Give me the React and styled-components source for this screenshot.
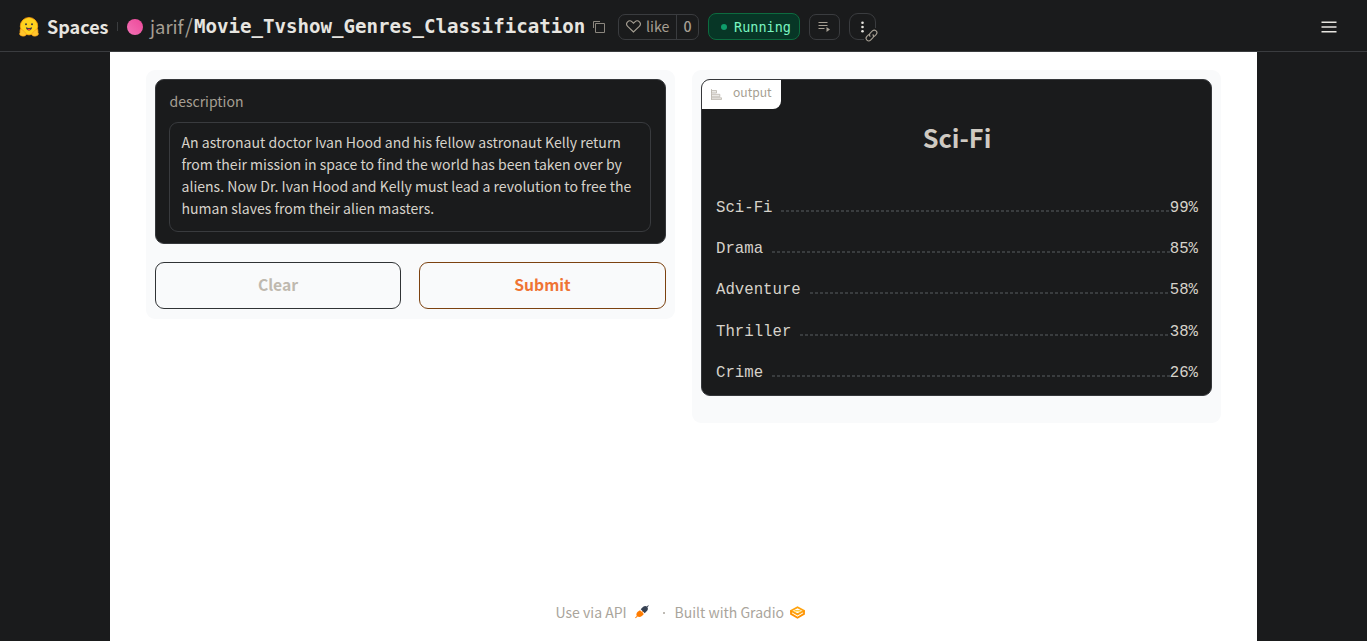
import React from "react";
import styled, { createGlobalStyle } from "styled-components";

const sans = `"Noto Sans CJK SC", "Open Sans", sans-serif`;
const mono = `"Liberation Mono", "DejaVu Sans Mono", monospace`;
const monoStrong = `"DejaVu Sans Mono", "Liberation Mono", monospace`;

const GlobalStyle = createGlobalStyle`
  *, *::before, *::after { box-sizing: border-box; }
  body { margin: 0; background: #1a1b1c; font-family: ${sans}; overflow: hidden; }
  button, textarea { font: inherit; margin: 0; }
`;

const Page = styled.div`
  height: 641px;
  display: flex;
  flex-direction: column;
  background: #1a1b1c;
`;

const Header = styled.header`
  height: 52px;
  flex: none;
  display: flex;
  align-items: center;
  padding: 2px 30px 0 19px;
  border-bottom: 1px solid #3a3c3f;
  color: #e7e5e0;
  white-space: nowrap;
`;

const Brand = styled.span`
  width: 62px;
  margin-left: 8px;
  padding-bottom: 2px;
  font-size: 18px;
  font-weight: 700;
  line-height: 24px;
`;

const Separator = styled.span`
  width: 1px;
  height: 9px;
  margin-left: 8px;
  background: #3b3d3f;
`;

const Avatar = styled.span`
  width: 16px;
  height: 16px;
  margin-left: 9px;
  border-radius: 50%;
  background: linear-gradient(45deg, #f472b6, #ec4899);
`;

const Owner = styled.span`
  width: 35px;
  margin-left: 7px;
  padding-bottom: 2px;
  font-size: 18.4px;
  line-height: 24px;
  color: #a69f93;
`;

const Slash = styled.span`
  width: 9px;
  padding-bottom: 2px;
  font-size: 20px;
  line-height: 24px;
  color: #a69f93;
`;

const SpaceName = styled.span`
  width: 391px;
  font: 700 19.12px/24px ${monoStrong};
`;

const CopyIcon = styled.svg`
  margin-left: 8px;
`;

const LikeGroup = styled.div`
  display: flex;
  width: 81px;
  height: 26px;
  margin-left: 13px;
  border: 1px solid #3a3c3f;
  border-radius: 7px;
  color: #a69f93;
  font-size: 14.2px;
  line-height: 22px;
`;

const LikeAction = styled.div`
  display: flex;
  align-items: center;
  width: 58px;
  gap: 5px;
  padding: 0 0 1px 7px;
  border-right: 1px solid #3a3c3f;
`;

const LikeCount = styled.div`
  flex: 1;
  font-weight: 500;
  text-align: center;
`;

const Status = styled.div`
  display: flex;
  align-items: center;
  width: 92px;
  height: 27px;
  margin-left: 9px;
  padding-left: 12px;
  border: 1px solid #0d6b3f;
  border-radius: 8px;
  background: #073626;
  color: #79f5c0;
  font: 13.5px/24px ${monoStrong};
`;

const StatusDot = styled.span`
  width: 6px;
  height: 6px;
  margin-right: 7px;
  border-radius: 50%;
  background: #0f9d6b;
`;

const IconButton = styled.button`
  position: relative;
  display: flex;
  align-items: center;
  justify-content: center;
  width: ${(p) => p.$width}px;
  height: ${(p) => p.$height}px;
  margin-left: 9px;
  padding: 0;
  border: 1px solid #3a3c3f;
  border-radius: ${(p) => p.$radius}px;
  background: transparent;
  color: #a69f93;
`;

const LinkBadge = styled.span`
  position: absolute;
  left: 14px;
  top: 14px;
  display: flex;
  width: 15px;
  height: 15px;
  background: #1a1b1c;
`;

const MenuIcon = styled.svg`
  margin-left: auto;
`;

const Main = styled.main`
  flex: 1;
  width: 1147px;
  margin-left: 110px;
  padding: 18px 36px 0;
  display: flex;
  flex-direction: column;
  justify-content: space-between;
  background: #fff;
`;

const Columns = styled.div`
  display: flex;
  align-items: flex-start;
  gap: 17px;
`;

const Column = styled.section`
  width: 529px;
  height: ${(p) => p.$height}px;
  padding: 9px;
  border-radius: 9px;
  background: #f9fafb;
`;

const Panel = styled.div`
  position: relative;
  height: ${(p) => p.$height}px;
  overflow: hidden;
  padding: 0 13px 0 14px;
  border: 1px solid #35373a;
  border-radius: 9px;
  background: #1a1b1c;
`;

const FieldLabel = styled.label`
  display: block;
  margin: 10px 0 0 -0.5px;
  font-size: 14px;
  line-height: 22px;
  color: #a69f93;
`;

const TextBox = styled.div`
  height: 110px;
  margin: 10px 1px 0 -1px;
  padding: 8px 11.5px;
  border: 1px solid #393b3e;
  border-radius: 9px;
  color: #d6d2ca;
  font-size: 14.05px;
  line-height: 22px;
  white-space: nowrap;
`;

const Actions = styled.div`
  display: grid;
  grid-template-columns: 246px 247px;
  gap: 18px;
  margin-top: 18px;
`;

const ActionButton = styled.button`
  height: 47px;
  padding: 0 0 2px;
  border: 1px solid ${(p) => (p.$primary ? "#7c4210" : "#303335")};
  border-radius: 9px;
  background: #f9fafb;
  color: ${(p) => (p.$primary ? "#ef7434" : "#bfb9af")};
  font-size: 15.7px;
  font-weight: 700;
  line-height: 24px;
`;

const OutputTab = styled.div`
  position: absolute;
  left: 0;
  top: 0;
  display: flex;
  align-items: center;
  gap: 11px;
  width: 79px;
  height: 29px;
  padding: 0 0 5px 9px;
  border-bottom-right-radius: 8px;
  background: #fff;
  color: #a69f93;
  font-size: 12.1px;
  line-height: 20px;

  svg { margin-top: 4px; }
`;

const TopLabel = styled.h2`
  margin: 37px 0 0;
  color: #cfcac2;
  font-size: 25.3px;
  font-weight: 700;
  line-height: 40px;
  text-align: center;
`;

const Scores = styled.div`
  margin-top: 39px;
`;

const ScoreRow = styled.div`
  display: flex;
  height: 41.2px;
  color: #d6d2ca;
  font: 15.7px/24px ${mono};
`;

const Leader = styled.span`
  flex: 1;
  height: 2px;
  margin: 14px 0 0 9px;
  background: repeating-linear-gradient(90deg, #393c3e 0 3px, transparent 3px 5px);
`;

const Footer = styled.footer`
  display: flex;
  align-items: center;
  justify-content: flex-start;
  height: 24px;
  margin: 0 0 17px 409.5px;
  color: #aaa59c;
  font-size: 14px;
  line-height: 24px;
  white-space: nowrap;
`;

const ApiText = styled.span`
  width: 71px;
`;

const Dot = styled.span`
  width: 2px;
  height: 2px;
  margin: 1px 10px 0 14px;
  border-radius: 1px;
  background: #aaa59c;
`;

const BuiltText = styled.span`
  width: 110px;
`;

const FooterIcon = styled.svg`
  margin-left: ${(p) => p.$gap}px;
`;

const scores = [
  ["Sci-Fi", 99],
  ["Drama", 85],
  ["Adventure", 58],
  ["Thriller", 38],
  ["Crime", 26],
];

const HuggingFace = () => (
  <svg width="20" height="20" viewBox="0 0 20 20">
    <circle cx="10" cy="9.2" r="8.7" fill="#ffd21e" stroke="#ff9d0b" strokeWidth=".8" />
    <path d="M1.3 12.4c1.5-.7 3.8 1.7 5.5 3.8.9 1.2.1 2.8-1.4 2.9-2.7.4-5-.9-4.9-2.4.1-.5.5-.7.7-.9-.7-.8-.5-1.5.3-1.8-.7-.5-.7-1.3-.2-1.6Z" fill="#ffc52c" stroke="#f79b16" strokeWidth=".6" />
    <path d="M18.7 12.4c-1.5-.7-3.8 1.7-5.5 3.8-.9 1.2-.1 2.8 1.4 2.9 2.7.4 5-.9 4.9-2.4-.1-.5-.5-.7-.7-.9.7-.8.5-1.5-.3-1.8.7-.5.7-1.3.2-1.6Z" fill="#ffc52c" stroke="#f79b16" strokeWidth=".6" />
    <circle cx="7" cy="7.3" r="1" fill="#3a3b45" />
    <circle cx="13" cy="7.3" r="1" fill="#3a3b45" />
    <path d="M6.9 10.2c2 .9 4.2.9 6.2 0-.1 2-1.4 3.2-3.1 3.2s-3-1.2-3.1-3.2Z" fill="#3a3b45" />
    <path d="M8.2 12.6c.7-1.2 2.9-1.2 3.6 0-.9 1-2.7 1-3.6 0Z" fill="#f94040" />
  </svg>
);

const LinkGlyph = () => (
  <svg width="15" height="15" viewBox="0 0 15 15" fill="none" stroke="#a69f93" strokeWidth="1.1">
    <g transform="rotate(-45 7.5 7.5)">
      <path d="M6.5 4.9H3.6a2.6 2.6 0 0 0 0 5.2h3.1a2.6 2.6 0 0 0 2.5-2.6" />
      <path d="M8.5 10.1h2.9a2.6 2.6 0 0 0 0-5.2H8.3a2.6 2.6 0 0 0-2.5 2.6" />
    </g>
  </svg>
);

export default function App() {
  return (
    <Page>
      <GlobalStyle />
      <Header>
        <HuggingFace />
        <Brand>Spaces</Brand>
        <Separator />
        <Avatar />
        <Owner>jarif</Owner>
        <Slash>/</Slash>
        <SpaceName>Movie_Tvshow_Genres_Classification</SpaceName>
        <CopyIcon width="12" height="12" viewBox="0 0 12 12" fill="none" stroke="#8b867e">
          <path d="M2.5 2.5h9v9h-9zM.5 7V.5H7" />
        </CopyIcon>
        <LikeGroup>
          <LikeAction>
            <svg width="15" height="13" viewBox="0 0 15 13" fill="none" stroke="currentColor" strokeWidth="1.1">
              <path d="M7.5 12 1.7 6.4C.4 5 .4 3 1.6 1.8s3.2-1.2 4.5 0l1.4 1.4 1.4-1.4c1.3-1.2 3.3-1.2 4.5 0s1.2 3.2-.1 4.6Z" />
            </svg>
            like
          </LikeAction>
          <LikeCount>0</LikeCount>
        </LikeGroup>
        <Status>
          <StatusDot />
          Running
        </Status>
        <IconButton $width={31} $height={26} $radius={7}>
          <svg width="13" height="12" viewBox="0 0 13 12" fill="none" stroke="currentColor">
            <path d="M.5 1.5h9M.5 4.5h9M.5 7.5h6" />
            <path d="M8.5 6v5l3.5-2.5Z" fill="currentColor" stroke="none" />
          </svg>
        </IconButton>
        <IconButton $width={27} $height={27} $radius={9}>
          <svg width="3" height="12" viewBox="0 0 3 12" fill="#e7e5e0">
            <circle cx="1.5" cy="1.7" r="1.3" />
            <circle cx="1.5" cy="6" r="1.3" />
            <circle cx="1.5" cy="10.3" r="1.3" />
          </svg>
          <LinkBadge>
            <LinkGlyph />
          </LinkBadge>
        </IconButton>
        <MenuIcon width="16" height="12" viewBox="0 0 16 12" stroke="#e7e5e0" strokeWidth="1.5">
          <path d="M.5 1.2h15M.5 6h15M.5 10.8h15" />
        </MenuIcon>
      </Header>
      <Main>
        <Columns>
          <Column $height={249}>
            <Panel $height={165}>
              <FieldLabel>description</FieldLabel>
              <TextBox>
                An astronaut doctor Ivan Hood and his fellow astronaut Kelly return<br />
                from their mission in space to find the world has been taken over by<br />
                aliens. Now Dr. Ivan Hood and Kelly must lead a revolution to free the<br />
                human slaves from their alien masters.
              </TextBox>
            </Panel>
            <Actions>
              <ActionButton>Clear</ActionButton>
              <ActionButton $primary>Submit</ActionButton>
            </Actions>
          </Column>
          <Column $height={353}>
            <Panel $height={317}>
              <OutputTab>
                <svg width="11" height="11" viewBox="0 0 11 11" fill="#ebe9e5" stroke="#bdb8ae" strokeWidth=".8">
                  <path d="M.5 0v11M.5 1.5h5v2.5h-5zM.5 5.3h8.3v2.5H.5zM.5 8.8h10v1.7H.5z" />
                </svg>
                output
              </OutputTab>
              <TopLabel>Sci-Fi</TopLabel>
              <Scores>
                {scores.map(([name, value]) => (
                  <ScoreRow key={name}>
                    <span>{name}</span>
                    <Leader />
                    <span>{value}%</span>
                  </ScoreRow>
                ))}
              </Scores>
            </Panel>
          </Column>
        </Columns>
        <Footer>
          <ApiText>Use via API</ApiText>
          <FooterIcon $gap={8} width="14" height="14" viewBox="0 0 14 14">
            <path d="M5.7 4.3 8.2 1.8c1.3-1 2.8-.9 3.6-.2L13.2.2l.6.6-1.4 1.4c.7 1 .7 2.3-.3 3.6L9.7 8.3Z" fill="#364153" />
            <path d="M5 5.2 8.9 9 7.2 10.8c-1.6 1.4-3.4 1.5-4.7.8L.8 13.3l-.7-.7 1.7-1.7c-.7-1.3-.5-2.8.9-4.2ZM6.3 7.3 7.5 6l.7.7L7 8Z" fill="#ff7c00" />
          </FooterIcon>
          <Dot />
          <BuiltText>Built with Gradio</BuiltText>
          <FooterIcon $gap={5} width="15" height="13" viewBox="0 0 15 13" fill="none" strokeWidth="1.8">
            <path d="M1 4.8 7.5 1.2 14 4.8 7.5 8.4Z" stroke="#ffa20d" />
            <path d="M1 4.8v3.1l6.5 3.8L14 7.9V4.8" stroke="#ff9200" />
            <path d="M4.5 4.8h6" stroke="#ffc524" strokeWidth="1.3" />
          </FooterIcon>
        </Footer>
      </Main>
    </Page>
  );
}
